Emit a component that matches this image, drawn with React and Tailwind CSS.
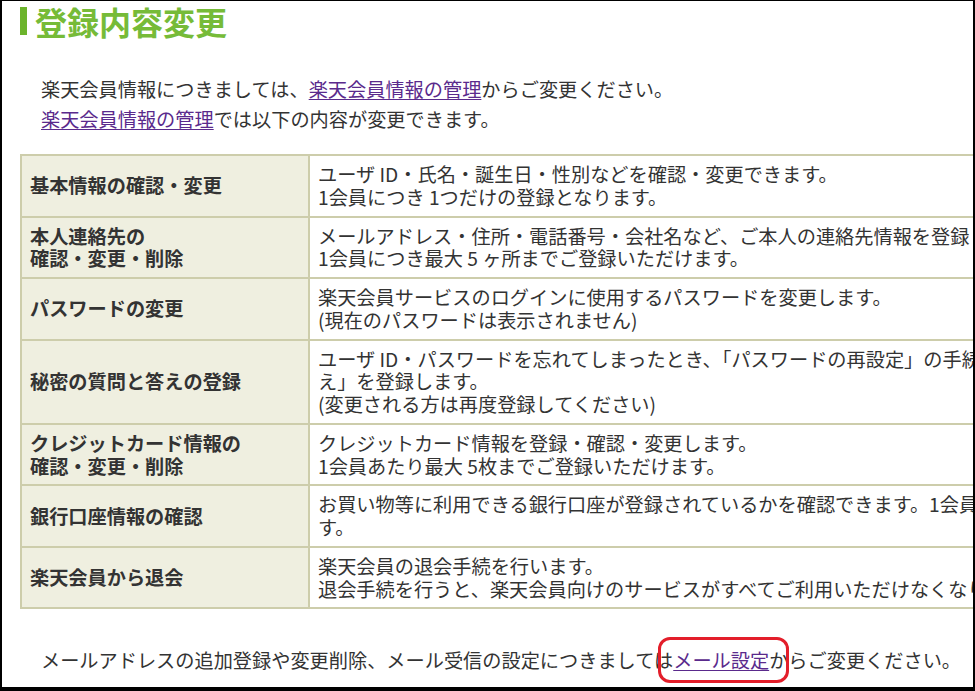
import React from "react"

const jp = { fontFamily: '"Noto Sans CJK JP", "Noto Sans", sans-serif' }

const rows = [
  {
    head: ["基本情報の確認・変更"],
    body: ["ユーザ ID・氏名・誕生日・性別などを確認・変更できます。", "1会員につき 1つだけの登録となります。"],
  },
  {
    head: ["本人連絡先の", "確認・変更・削除"],
    body: [
      "メールアドレス・住所・電話番号・会社名など、ご本人の連絡先情報を登録・確認・変更・削除できます。",
      "1会員につき最大 5 ヶ所までご登録いただけます。",
    ],
  },
  {
    head: ["パスワードの変更"],
    body: ["楽天会員サービスのログインに使用するパスワードを変更します。", "(現在のパスワードは表示されません)"],
  },
  {
    head: ["秘密の質問と答えの登録"],
    body: [
      "ユーザ ID・パスワードを忘れてしまったとき、「パスワードの再設定」の手続きで必要となる「秘密の質問と答",
      "え」を登録します。",
      "(変更される方は再度登録してください)",
    ],
  },
  {
    head: ["クレジットカード情報の", "確認・変更・削除"],
    body: ["クレジットカード情報を登録・確認・変更します。", "1会員あたり最大 5枚までご登録いただけます。"],
  },
  {
    head: ["銀行口座情報の確認"],
    body: [
      "お買い物等に利用できる銀行口座が登録されているかを確認できます。1会員につき最大1口座までご登録いただけま",
      "す。",
    ],
  },
  {
    head: ["楽天会員から退会"],
    body: ["楽天会員の退会手続を行います。", "退会手続を行うと、楽天会員向けのサービスがすべてご利用いただけなくなります。"],
  },
]

export default function App() {
  return (
    <div
      className="w-[975px] h-[691px] overflow-hidden bg-white border-black border-t border-l-2 border-r-2 border-b-4 text-[#333]"
      style={jp}
    >
      {/* Title */}
      <div className="pt-[4px] pl-[18px] flex items-center gap-[8px]">
        <span className="w-[7px] h-[28px] bg-[#6cb42c]" />
        <h1 className="text-[32px] leading-[32px] font-bold text-[#76bb38]">登録内容変更</h1>
      </div>

      {/* Intro */}
      <div className="mt-[37px] ml-[39px] text-[19.2px] leading-[30px]">
        <p>
          楽天会員情報につきましては、
          <a href="#" className="text-[#5a2a8c] underline underline-offset-2">楽天会員情報の管理</a>
          からご変更ください。
        </p>
        <p>
          <a href="#" className="text-[#5a2a8c] underline underline-offset-2">楽天会員情報の管理</a>
          では以下の内容が変更できます。
        </p>
      </div>

      {/* Table */}
      <table className="mt-[20px] ml-[18px] w-[1150px] table-fixed border-collapse border-2 border-[#cdcdab] text-[19.2px] leading-[22.75px]">
        <colgroup>
          <col className="w-[288px]" />
          <col />
        </colgroup>
        <tbody>
          {rows.map((r, i) => (
            <tr key={i}>
              <th className="bg-[#efefe0] border-2 border-[#cdcdab] px-[8px] py-[7px] text-left align-middle font-bold text-[#333]">
                {r.head.map((l, j) => (
                  <div key={j} className="whitespace-nowrap">{l}</div>
                ))}
              </th>
              <td className="bg-white border-2 border-[#cdcdab] px-[8px] py-[7px] align-middle">
                {r.body.map((l, j) => (
                  <div key={j} className="whitespace-nowrap">{l}</div>
                ))}
              </td>
            </tr>
          ))}
        </tbody>
      </table>

      {/* Footer note */}
      <p className="mt-[36px] ml-[39px] text-[19.2px] leading-[30px] whitespace-nowrap">
        メールアドレスの追加登録や変更削除、メール受信の設定につきましては
        <span className="relative">
          <a href="#" className="text-[#5a2a8c] underline underline-offset-2">メール設定</a>
          <span className="absolute left-[-15px] right-[-20px] top-[-9px] bottom-[-9px] border-[3px] border-[#e31e2a] rounded-[12px] pointer-events-none" />
        </span>
        からご変更ください。
      </p>
    </div>
  )
}
